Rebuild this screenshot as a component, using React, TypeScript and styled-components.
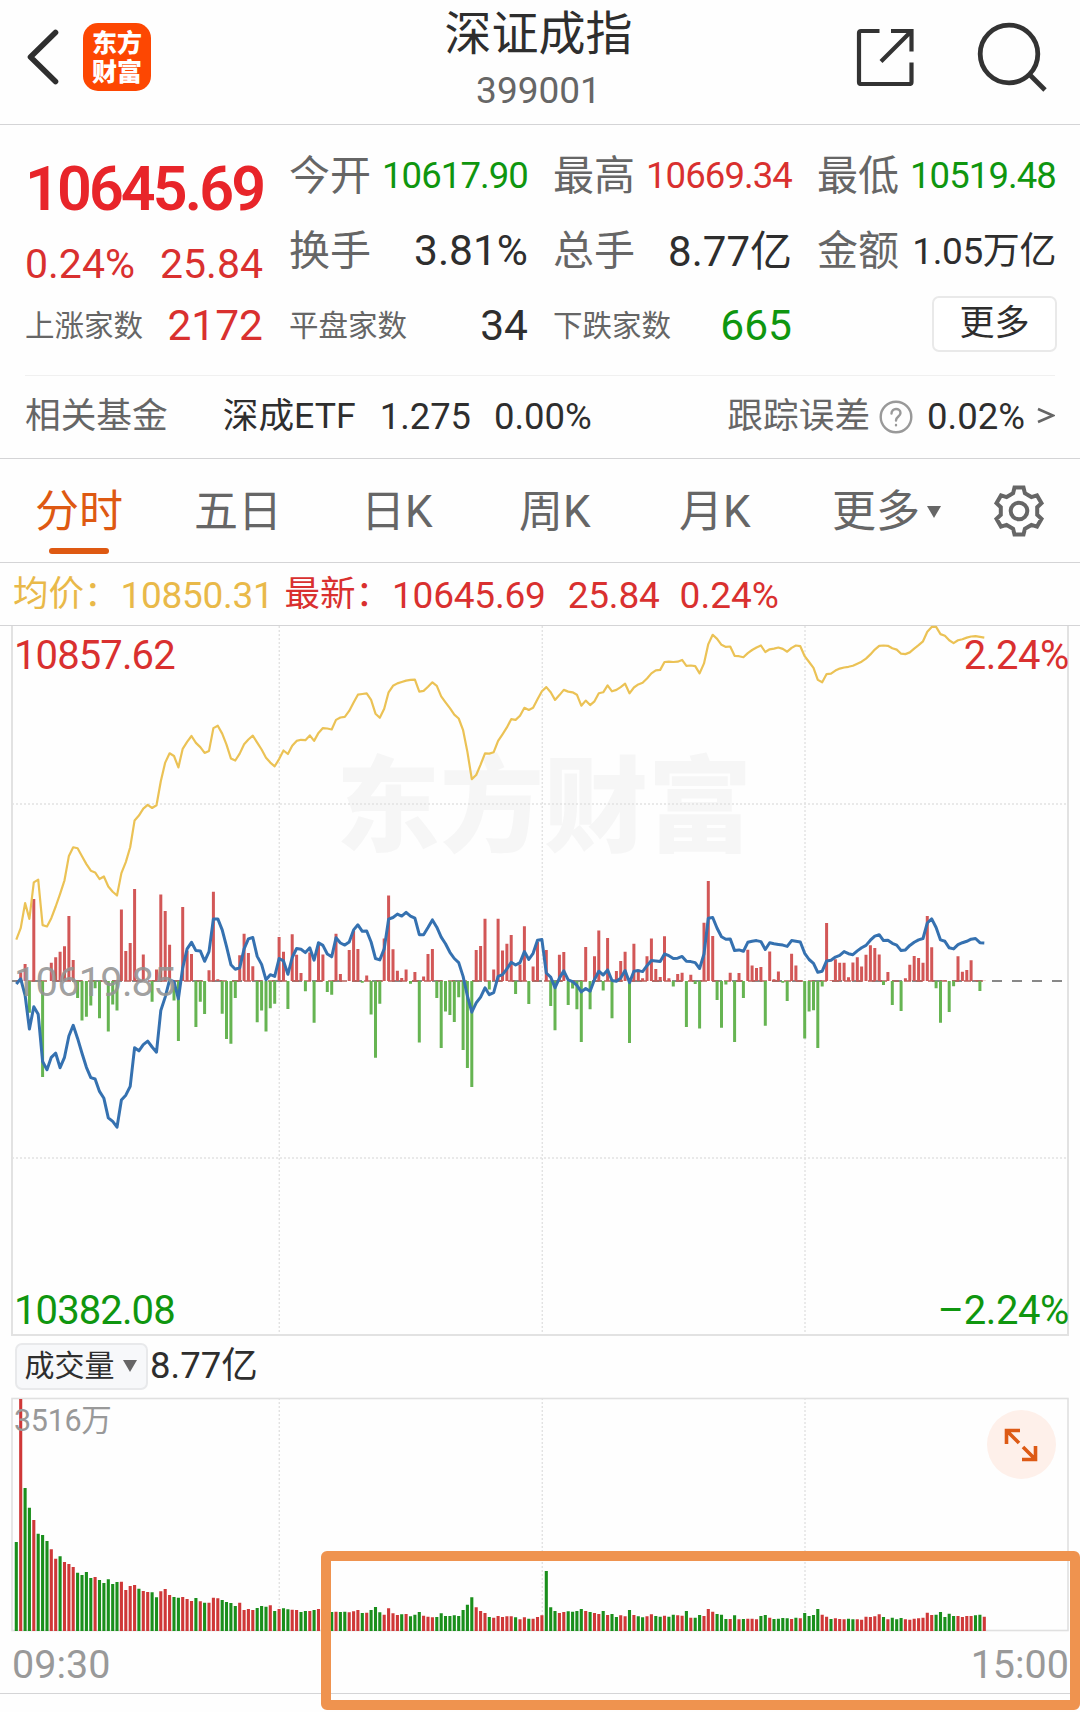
import React from 'react';
import styled, { createGlobalStyle } from 'styled-components';

const RED = '#d9302f';
const GREEN = '#0f960f';
const INK = '#2e2e2e';
const MUTED = '#666';
const FAINT = '#999';
const ORANGE = '#de5912';
const LINE = '#d4d4d6';

const GlobalStyle = createGlobalStyle`
  * { box-sizing: border-box; }
  body { margin: 0; background: #fefefe; }
`;

const Page = styled.main`
  position: relative;
  width: 1080px;
  height: 1712px;
  overflow: hidden;
  background: #fefefe;
  color: ${INK};
  font-family: Roboto, 'Noto Sans CJK SC', sans-serif;
  line-height: 1;
  white-space: nowrap;
`;

const Text = styled.span<{ $size: number; $color?: string; $track?: number; $weight?: number }>`
  display: block;
  font-size: ${p => p.$size}px;
  color: ${p => p.$color ?? INK};
  letter-spacing: ${p => p.$track ?? 0}px;
  font-weight: ${p => p.$weight ?? 400};
`;

/* ---------- header ---------- */
const Header = styled.header`
  display: grid;
  grid-template-columns: 1fr auto 1fr;
  height: 125px;
  padding: 0 33px 0 26px;
  border-bottom: 1px solid ${LINE};
`;
const HeaderSide = styled.div<{ $end?: boolean }>`
  display: flex;
  align-items: center;
  justify-content: ${p => (p.$end ? 'flex-end' : 'flex-start')};
  gap: ${p => (p.$end ? 61 : 21)}px;
  height: 114px;
`;
const Titles = styled.div`
  display: flex;
  flex-direction: column;
  align-items: center;
  padding: 10px 0 0 4px;
  gap: 15px;
`;
const Logo = styled.div`
  display: grid;
  align-content: center;
  justify-content: center;
  width: 68px;
  height: 68px;
  padding-bottom: 3px;
  border-radius: 15px;
  background: #fd4702;
  color: #fff;
  font: 900 25px/29px 'Noto Sans CJK SC', sans-serif;
  text-align: center;
`;

/* ---------- quote ---------- */
const Quote = styled.section`
  display: flex;
  gap: 26px;
  margin: 0 25px;
  height: 251px;
  padding-top: 14px;
  border-bottom: 1px solid #f0f0f0;
`;
const PriceColumn = styled.div`
  display: grid;
  grid-template-columns: 238px;
  grid-template-rows: 100px 51px 73px;
  width: 238px;
`;
const Spread = styled.div`
  display: flex;
  align-items: center;
  justify-content: space-between;
`;
const StatGrid = styled.div`
  display: grid;
  grid-template-columns: 239px 239px 239px;
  grid-template-rows: repeat(3, 75px);
  column-gap: 25px;
`;
const MoreButton = styled.button`
  width: 125px;
  height: 56px;
  margin: 0 -1px 5px auto;
  padding: 0 0 2px;
  border: 2px solid #e9e9e9;
  border-radius: 7px;
  background: #fff;
  color: ${INK};
  font: 35px/1 Roboto, 'Noto Sans CJK SC', sans-serif;
`;
const FundRow = styled.section`
  display: flex;
  align-items: center;
  height: 83px;
  padding: 0 25px;
  border-bottom: 1px solid ${LINE};
`;
const Gap = styled.i<{ $w?: number }>`
  ${p => (p.$w ? `width: ${p.$w}px;` : 'flex: 1;')}
`;

/* ---------- tabs ---------- */
const Tabs = styled.nav`
  display: grid;
  grid-template-columns: 159px 167px 158px 160px 153px 1fr auto;
  align-items: center;
  height: 104px;
  padding: 0 34px 0 35px;
  border-bottom: 1px solid ${LINE};
`;
const Tab = styled.a<{ $active?: boolean }>`
  position: relative;
  display: flex;
  align-items: center;
  gap: 7px;
  height: 103px;
  padding-top: 3px;
  color: ${p => (p.$active ? ORANGE : MUTED)};
  font-size: 44px;
  &::after {
    content: '';
    display: ${p => (p.$active ? 'block' : 'none')};
    position: absolute;
    left: 14px;
    bottom: 8px;
    width: 60px;
    height: 6px;
    border-radius: 3px;
    background: ${ORANGE};
  }
`;
const Caret = styled.i<{ $w: number; $h: number }>`
  border: ${p => p.$w / 2}px solid transparent;
  border-top: ${p => p.$h}px solid ${MUTED};
  border-bottom: 0;
`;

/* ---------- charts ---------- */
const Legend = styled.div`
  display: flex;
  align-items: center;
  height: 63px;
  padding: 2px 0 0 13px;
  border-bottom: 1px solid ${LINE};
`;
const Plot = styled.section<{ $h: number }>`
  position: relative;
  height: ${p => p.$h}px;
  margin: 0 12px;
  svg.plot { display: block; position: relative; overflow: visible; }
`;
const Watermark = styled.div`
  position: absolute;
  inset: 121px 0 auto 0;
  padding-left: 8px;
  text-align: center;
  color: #f6f6f6;
  font: 900 104px/1 'Noto Sans CJK SC', sans-serif;
`;
const AxisLabel = styled.div<{ $top: number; $color: string; $right?: boolean; $size?: number; $track?: number }>`
  position: absolute;
  top: ${p => p.$top}px;
  ${p => (p.$right ? 'right: -1px;' : 'left: 2px;')}
  color: ${p => p.$color};
  font-size: ${p => p.$size ?? 40}px;
  letter-spacing: ${p => p.$track ?? -0.9}px;
`;
const VolumeBar = styled.div`
  display: flex;
  align-items: center;
  gap: 2px;
  height: 62px;
  padding: 0 15px 2px;
`;
const Picker = styled.button`
  display: flex;
  align-items: center;
  justify-content: center;
  gap: 8px;
  width: 133px;
  height: 47px;
  padding: 0 2px 1px 0;
  border: 2px solid #e8e9eb;
  border-radius: 7px;
  background: #f7f8fa;
  color: ${INK};
  font: 30px/1 Roboto, 'Noto Sans CJK SC', sans-serif;
`;
const Expand = styled.button`
  position: absolute;
  top: 12px;
  right: 12px;
  display: grid;
  place-items: center;
  width: 69px;
  height: 69px;
  padding: 0 2px 0 0;
  border: 0;
  border-radius: 50%;
  background: #fef0ea;
`;
const TimeAxis = styled.footer`
  display: flex;
  align-items: center;
  justify-content: space-between;
  height: 63px;
  padding: 5px 11px 0 12px;
  border-bottom: 1px solid ${LINE};
`;
const Highlight = styled.div`
  position: absolute;
  left: 321px;
  top: 1551px;
  width: 759px;
  height: 159px;
  border: 10.5px solid #ef934f;
  border-radius: 6px;
`;

/* ---------- series ---------- */
const STEP = 4.38;
const X0 = 16.3;
const ZERO = 981;
const nums = (s: string) => s.trim().split(/\s+/).map(Number);
const at = (i: number) => X0 + i * STEP;

const AVERAGE = nums(`
928 895 822 868 762 754 886 890 866 832 795 756 685 660 663 686 709 728 733 752 745 774 789 800 735 703 660 582 568 548
537 546 538 468 414 387 395 428 374 354 337 357 369 386 380 314 307 330 362 402 408 388 361 347 336 356 376 400 414 425
404 379 389 365 351 348 349 335 351 328 314 315 318 290 283 281 264 240 217 215 213 232 272 284 258 210 191 184 180 176
174 173 208 206 194 181 191 222 239 256 275 286 320 383 462 450 420 387 388 384 351 332 312 288 290 278 255 261 255 230
207 195 210 232 218 203 208 210 217 249 234 247 236 213 210 190 207 203 195 185 213 196 187 182 170 155 146 145 122 121
122 121 116 133 132 134 155 126 70 43 55 72 78 77 104 105 108 96 87 80 74 93 85 83 80 84 92 81 74 76
105 122 139 174 181 157 156 147 141 138 136 133 127 121 112 100 86 75 74 75 82 86 98 99 94 83 73 62 34 20
20 41 46 59 67 59 56 51 48 47 49 51`);

const PRICE = nums(`
1057 1042 1090 1188 1123 1145 1282 1306 1270 1258 1300 1270 1208 1177 1215 1258 1299 1329 1333 1369 1389 1446 1456 1473 1394 1380 1354 1242 1251 1233
1223 1240 1255 1134 1095 1045 1050 1100 1010 955 936 960 961 991 963 868 868 900 948 1001 1014 1010 955 926 922 977 1000 1045 1030 1035
983 990 1029 980 954 956 966 952 988 937 945 970 978 923 938 944 935 900 885 904 903 935 983 987 955 869 864 854 860 849
860 866 914 914 893 871 892 921 940 965 983 995 1035 1092 1139 1112 1095 1068 1088 1082 1035 1030 1013 994 1002 995 963 986 968 930
928 1025 1037 1068 1040 1019 1045 1050 1061 1080 1070 1078 1044 1020 1031 1016 1047 1049 1040 1018 1053 1020 1018 1021 1004 989 990 992 970 975
983 982 977 991 992 995 1012 970 866 864 895 920 927 926 960 958 962 936 933 931 934 957 937 940 942 944 948 931 933 935
968 986 997 1023 1020 990 988 979 974 963 969 972 961 952 945 930 918 914 931 930 939 944 960 958 945 936 929 925 880 868
893 929 933 952 955 943 937 933 927 925 937 938`);

const MOMENTUM = nums(`
0 25 49 -92 238 0 -279 0 53 69 85 101 189 61 -49 -115 -104 -71 -21 -108 0 -147 -68 -86 208 87 110 267 0 77
0 -60 33 251 203 105 -57 -174 215 88 78 -134 -60 -96 31 259 5 -95 -168 -182 -49 75 137 81 43 -120 -86 -147 -79 -66
128 85 -81 136 76 23 -30 83 -121 110 77 -32 -40 137 20 0 90 145 93 -5 16 -97 -223 -66 123 248 92 30 9 33
-8 26 -179 13 78 93 -49 -195 -89 -99 -119 -47 -200 -253 -308 90 102 181 -25 33 181 89 108 134 -38 48 159 -67 42 113
0 90 -73 -143 76 84 -70 -22 -82 -177 99 -82 72 147 -28 125 -108 29 58 85 -180 108 33 8 72 123 35 12 130 8
-16 20 24 -134 18 -9 -138 169 290 131 -55 -136 -10 24 -177 23 -49 91 45 38 41 -130 86 5 28 -5 -58 79 45 2
-167 -89 -85 -195 -16 168 2 63 53 53 11 54 69 42 76 104 96 77 -12 26 -70 0 -87 8 47 73 67 53 189 98
-21 -121 2 -90 -15 72 27 32 60 2 -29 1`);

/* positive = up tick, negative = down tick */
const VOLUME = nums(`
-267 696 -429 -370 333 -292 -288 -270 245 217 -224 207 201 192 -175 -168 -177 -159 162 -153 -144 -155 -141 -147 148 123 135 138 -127 120
117 -116 -101 119 126 108 -102 -100 102 96 90 -99 89 -85 85 100 98 -93 -87 -84 -75 85 63 66 63 -69 -75 -73 77 -60
66 -68 -65 64 63 -57 -60 60 -63 66 60 58 -57 58 -57 -58 56 59 63 -54 55 -63 -72 -56 49 68 53 48 -50 51
-44 -49 -57 46 43 41 -42 -53 -45 -45 -47 -45 -63 -79 -101 71 60 54 -42 40 45 42 44 44 -41 35 41 -37 37 42
47 -180 -71 -60 54 57 -59 -58 -60 -66 60 -57 54 51 -60 48 -51 -42 47 44 -63 48 -44 -41 44 50 -45 -43 46 -43
-49 47 46 -60 40 -40 -48 45 66 58 -51 -49 -36 36 -47 35 -36 37 37 35 -45 -48 40 -36 -37 -39 -38 36 -40 38
-54 -45 -48 -66 49 43 -36 38 36 35 -37 -35 35 34 43 42 44 50 -42 35 -40 -35 -39 35 34 37 38 40 55 48
-49 -57 -42 -52 -45 45 42 45 45 -47 -49 43`);

const linePath = (ys: number[]) =>
  ys.map((y, i) => `${i ? 'L' : 'M'}${at(i).toFixed(1)} ${(620 + y / 2.904).toFixed(1)}`).join('');

const barsPath = (values: number[], sign: 1 | -1, base: number, scale: number, flip: boolean) =>
  values
    .map((v, i) => {
      if (v * sign <= 0) return '';
      const h = Math.abs(v) / scale;
      const down = flip && v < 0;
      return `M${at(i).toFixed(1)} ${base}V${(down ? base + h : base - h).toFixed(1)}`;
    })
    .join('');

const GRID_X = [279.3, 542.3, 805];

function PriceChart() {
  return (
    <svg className="plot" width="1056" height="710" viewBox="12 626 1056 710" fill="none">
      <g stroke="#e2e2e2" strokeDasharray="2 2" strokeWidth="1.4">
        {GRID_X.map(x => <path key={x} d={`M${x} 626V1335`} />)}
        <path d="M12 804H1068M12 1158H1068" />
      </g>
      <path d="M12 626V1335H1068V626" stroke="#e2e2e2" strokeWidth="2" />
      <path d={`M12 ${ZERO}H1068`} stroke="#888" strokeWidth="1.8" strokeDasharray="10 10" />
      <path d={`M16 ${ZERO}H985`} stroke="#b5605a" strokeWidth="1.3" strokeDasharray="7 5" />
      <path d={barsPath(MOMENTUM, 1, ZERO, 2.904, true)} stroke="#d25757" strokeWidth="3" />
      <path d={barsPath(MOMENTUM, -1, ZERO, 2.904, true)} stroke="#66b452" strokeWidth="3" />
      <path d={linePath(AVERAGE)} stroke="#ebc255" strokeWidth="2.2" strokeLinejoin="round" />
      <path d={linePath(PRICE)} stroke="#3571b0" strokeWidth="3" strokeLinejoin="round" />
    </svg>
  );
}

function VolumeChart() {
  return (
    <svg className="plot" width="1056" height="233" viewBox="12 1398 1056 233" fill="none">
      <g stroke="#e2e2e2" strokeDasharray="2 2" strokeWidth="1.4">
        {GRID_X.map(x => <path key={x} d={`M${x} 1398V1631`} />)}
      </g>
      <rect x="12" y="1398.5" width="1056" height="232" stroke="#e0e0e0" strokeWidth="1.6" />
      <path d={barsPath(VOLUME, 1, 1631, 3, false)} stroke="#cf3838" strokeWidth="3.1" />
      <path d={barsPath(VOLUME, -1, 1631, 3, false)} stroke="#1a8f1c" strokeWidth="3.1" />
    </svg>
  );
}

const gearPath = () => {
  const pts: string[] = [];
  for (let k = 0; k < 6; k++) {
    const c = (k * 60 - 90) * (Math.PI / 180);
    [[-0.32, 18.6], [-0.19, 23.8], [0.19, 23.8], [0.32, 18.6]].forEach(([a, r]) =>
      pts.push(`${(27 + r * Math.cos(c + a)).toFixed(1)} ${(27 + r * Math.sin(c + a)).toFixed(1)}`),
    );
  }
  return `M${pts.join('L')}Z`;
};

const STATS = [
  { label: '今开', value: '10617.90', color: GREEN, size: 36.5, track: -0.9 },
  { label: '最高', value: '10669.34', color: RED, size: 36.5, track: -0.9 },
  { label: '最低', value: '10519.48', color: GREEN, size: 36.5, track: -0.9 },
  { label: '换手', value: '3.81%', color: INK, size: 42.5, track: 0 },
  { label: '总手', value: '8.77亿', color: INK, size: 42, track: 0 },
  { label: '金额', value: '1.05万亿', color: INK, size: 37, track: -0.4 },
  { label: '平盘家数', value: '34', color: INK, size: 42.5, track: 0 },
  { label: '下跌家数', value: '665', color: GREEN, size: 42.5, track: 0 },
];

export default function App() {
  return (
    <Page>
      <GlobalStyle />
      <Header>
        <HeaderSide>
          <svg width="36" height="58" viewBox="0 0 36 58" fill="none" stroke="#2f2f2f" strokeWidth="5.600" strokeLinecap="round" strokeLinejoin="round">
            <path d="M29.500 4.500L4.500 29L29.500 53.500" />
          </svg>
          <Logo>东方<br />财富</Logo>
        </HeaderSide>
        <Titles>
          <Text $size={47}>深证成指</Text>
          <Text $size={37} $color={MUTED}>399001</Text>
        </Titles>
        <HeaderSide $end>
          <svg width="58" height="58" viewBox="0 0 58 58" fill="none" stroke="#333" strokeWidth="4.200">
            <path d="M23.500 3H5Q3 3 3 5V54Q3 56 5 56H53.500Q55.500 56 55.500 54V34.500M35 3H55.500V23.500M55 3.500L25 33.500" />
          </svg>
          <svg width="72" height="72" viewBox="0 0 72 72" fill="none" stroke="#333" strokeWidth="4.800">
            <circle cx="34" cy="33" r="28.800" />
            <path d="M54 53L70 69" />
          </svg>
        </HeaderSide>
      </Header>

      <Quote>
        <PriceColumn>
          <Spread><Text $size={61} $weight={600} $color="#e8252a" $track={-2.9}>10645.69</Text></Spread>
          <Spread>
            <Text $size={41} $color={RED}>0.24%</Text>
            <Text $size={41} $color={RED}>25.84</Text>
          </Spread>
          <Spread>
            <Text $size={29.5} $color={MUTED}>上涨家数</Text>
            <Text $size={42.5} $color={RED}>2172</Text>
          </Spread>
        </PriceColumn>
        <StatGrid>
          {STATS.map(s => (
            <Spread key={s.label}>
              <Text $size={s.label.length > 2 ? 29.5 : 41} $color={MUTED}>{s.label}</Text>
              <Text $size={s.size} $color={s.color} $track={s.track}>{s.value}</Text>
            </Spread>
          ))}
          <Spread><MoreButton>更多</MoreButton></Spread>
        </StatGrid>
      </Quote>

      <FundRow>
        <Text $size={35.7} $color={MUTED}>相关基金</Text>
        <Gap $w={55} />
        <Text $size={35.7}>深成ETF</Text>
        <Gap $w={24} />
        <Text $size={36.3}>1.275</Text>
        <Gap $w={23} />
        <Text $size={36.5}>0.00%</Text>
        <Gap />
        <Text $size={35.7} $color={MUTED}>跟踪误差</Text>
        <Gap $w={9} />
        <svg width="34" height="34" viewBox="0 0 34 34" fill="none" stroke="#999" strokeWidth="2.400" strokeLinecap="round">
          <circle cx="17" cy="17" r="15.300" />
          <path d="M12.500 13.500C12.500 7.500 21.500 7.500 21.500 13C21.500 16.500 17 16.500 17 20.500M17 25V25.200" />
        </svg>
        <Gap $w={14} />
        <Text $size={36.5}>0.02%</Text>
        <Gap $w={10} />
        <svg width="20" height="22" viewBox="0 0 20 22" fill="none" stroke="#666" strokeWidth="2.600">
          <path d="M3 3L18 9.500L3 16" />
        </svg>
      </FundRow>

      <Tabs>
        <Tab $active>分时</Tab>
        <Tab>五日</Tab>
        <Tab>日K</Tab>
        <Tab>周K</Tab>
        <Tab>月K</Tab>
        <Tab>更多<Caret $w={15} $h={12} /></Tab>
        <svg width="54" height="54" viewBox="0 0 54 54" fill="none" stroke={MUTED} strokeWidth="4">
          <path d={gearPath()} />
          <circle cx="27" cy="27" r="8.300" />
        </svg>
      </Tabs>

      <Legend>
        <Text $size={35.5} $color="#e9b949">均价：</Text>
        <Gap $w={1} />
        <Text $size={37} $color="#e9b949" $track={-0.3}>10850.31</Text>
        <Gap $w={11} />
        <Text $size={35.5} $color={RED}>最新：</Text>
        <Gap $w={1} />
        <Text $size={37} $color={RED} $track={-0.2}>10645.69</Text>
        <Gap $w={22} />
        <Text $size={37} $color={RED} $track={-0.2}>25.84</Text>
        <Gap $w={20} />
        <Text $size={37} $color={RED}>0.24%</Text>
      </Legend>

      <Plot $h={710}>
        <Watermark>东方财富</Watermark>
        <PriceChart />
        <AxisLabel $top={10} $color={RED}>10857.62</AxisLabel>
        <AxisLabel $top={10} $color={RED} $right $track={-0.4}>2.24%</AxisLabel>
        <AxisLabel $top={337} $color="rgba(148,148,148,.9)">10619.85</AxisLabel>
        <AxisLabel $top={665} $color={GREEN}>10382.08</AxisLabel>
        <AxisLabel $top={665} $color={GREEN} $right $track={-0.4}>–2.24%</AxisLabel>
      </Plot>

      <VolumeBar>
        <Picker>成交量<Caret $w={15} $h={12} /></Picker>
        <Text $size={36.5}>8.77亿</Text>
      </VolumeBar>

      <Plot $h={233}>
        <VolumeChart />
        <AxisLabel $top={8} $color={FAINT} $size={30.5} $track={-0.3}>3516万</AxisLabel>
        <Expand>
          <svg width="36" height="36" viewBox="0 0 36 36" fill="none" stroke="#dd5a15" strokeWidth="3.600">
            <path d="M17 3.500H3.500V17M3.500 3.500L16 16M19 32.500H32.500V19M32.500 32.500L20 20" />
          </svg>
        </Expand>
      </Plot>

      <TimeAxis>
        <Text $size={39.5} $color={FAINT}>09:30</Text>
        <Text $size={39.5} $color={FAINT}>15:00</Text>
      </TimeAxis>

      <Highlight />
    </Page>
  );
}
